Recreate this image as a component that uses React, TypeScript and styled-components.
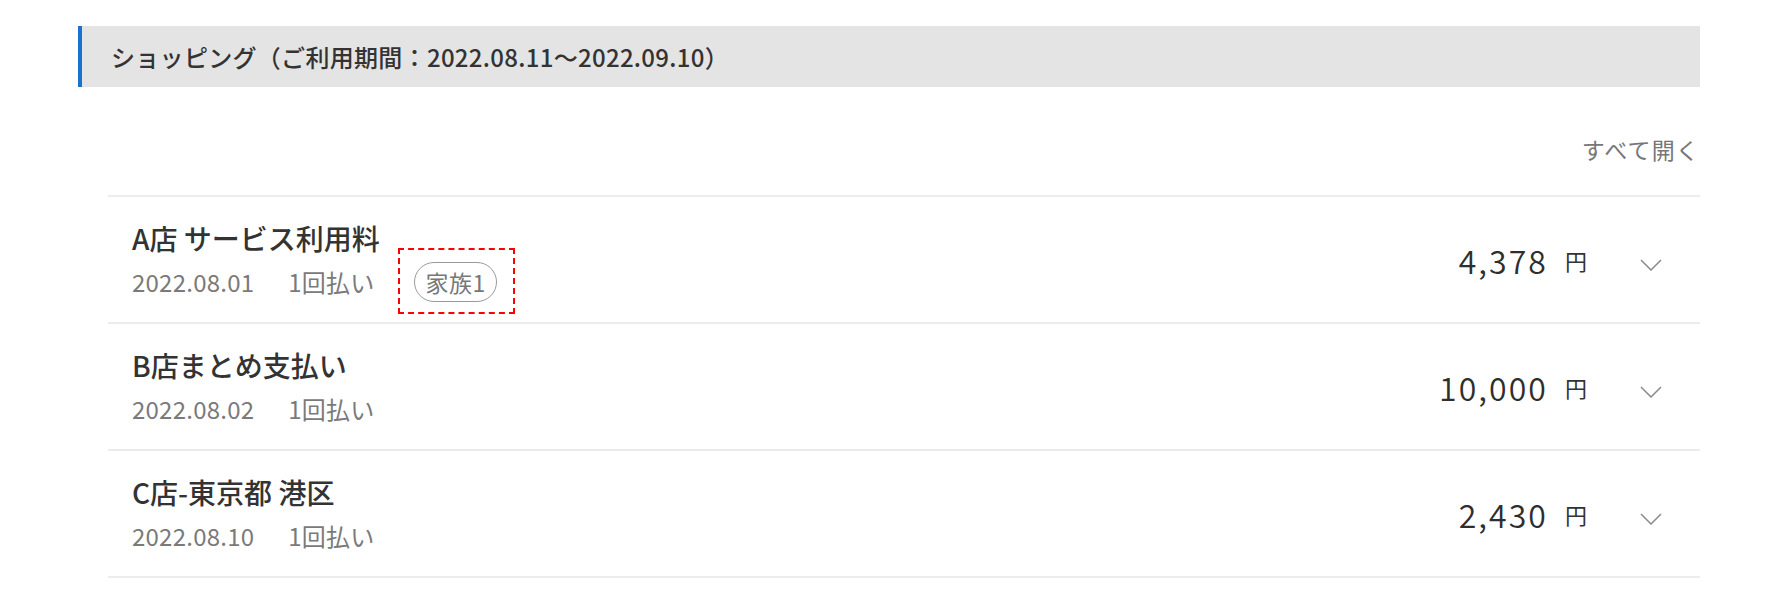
import React from "react";
import styled, { createGlobalStyle } from "styled-components";

const GlobalStyle = createGlobalStyle`
  html, body {
    margin: 0;
    padding: 0;
    background: #ffffff;
  }
  body {
    font-family: "Noto Sans CJK JP", "Noto Sans", sans-serif;
    color: #333333;
  }
`;

const Page = styled.div`
  padding: 26px 92px 0 78px;
  width: 1622px;
`;

const SectionHeader = styled.h2`
  margin: 0;
  height: 61px;
  display: flex;
  align-items: center;
  background: #e4e4e4;
  border-left: 4px solid #1a72cf;
  padding-left: 29px;
  font-size: 24px;
  font-weight: 500;
  color: #333333;
  letter-spacing: 0.3px;
`;

const Body = styled.div`
  padding-left: 30px;
`;

const ToolRow = styled.div`
  display: flex;
  justify-content: flex-end;
  margin-top: 45px;
  margin-bottom: 29px;
`;

const ExpandAll = styled.button`
  border: none;
  background: none;
  padding: 0;
  font-family: inherit;
  font-size: 23px;
  line-height: 34px;
  color: #777777;
  letter-spacing: 0.05em;
  cursor: pointer;
`;

const List = styled.ul`
  list-style: none;
  margin: 0;
  padding: 0;
  border-top: 2px solid #ececec;
`;

const Row = styled.li`
  display: flex;
  align-items: center;
  height: 125px;
  box-sizing: content-box;
  border-bottom: 2px solid #ececec;
  padding: 0 38px 0 24px;
`;

const Info = styled.div`
  flex: 1;
  display: flex;
  flex-direction: column;
  gap: 10px;
  margin-bottom: 3px;
`;

const Title = styled.div`
  font-size: 28px;
  font-weight: 500;
  line-height: 36px;
  color: #333333;
  letter-spacing: 0;
`;

const Meta = styled.div`
  display: flex;
  align-items: center;
  height: 30px;
  font-size: 24px;
  color: #7a7a7a;
  letter-spacing: 0.01em;
`;

const DateText = styled.span`
  margin-right: 34px;
`;

const Marked = styled.span`
  display: inline-flex;
  align-items: center;
  margin-left: 23px;
  padding: 12px 16px 10px 14px;
  border: 2px dashed #ff0000;
`;

const Tag = styled.span`
  display: inline-flex;
  align-items: center;
  height: 38px;
  padding: 0 10px 0 11px;
  border: 1px solid #9a9a9a;
  border-radius: 20px;
  font-size: 23px;
  color: #777777;
  letter-spacing: 0.02em;
`;

const Price = styled.div`
  display: flex;
  align-items: center;
`;

const Amount = styled.span`
  font-size: 32px;
  font-weight: 350;
  color: #2e2e2e;
  letter-spacing: 0.065em;
  line-height: 40px;
`;

const Yen = styled.span`
  margin-left: 17px;
  font-size: 22px;
  color: #333333;
`;

const Chevron = styled.svg`
  margin-left: 53px;
  margin-top: 10px;
  width: 22px;
  height: 12px;
  display: block;
`;

type Item = { title: string; date: string; pay: string; tag?: string; amount: string };

const items: Item[] = [
  { title: "A店 サービス利用料", date: "2022.08.01", pay: "1回払い", tag: "家族1", amount: "4,378" },
  { title: "B店まとめ支払い", date: "2022.08.02", pay: "1回払い", amount: "10,000" },
  { title: "C店-東京都 港区", date: "2022.08.10", pay: "1回払い", amount: "2,430" },
];

export default function App() {
  return (
    <>
      <GlobalStyle />
      <Page>
        <SectionHeader>ショッピング（ご利用期間：2022.08.11〜2022.09.10）</SectionHeader>
        <Body>
          <ToolRow>
            <ExpandAll>すべて開く</ExpandAll>
          </ToolRow>
          <List>
            {items.map((it) => (
              <Row key={it.title}>
                <Info>
                  <Title>{it.title}</Title>
                  <Meta>
                    <DateText>{it.date}</DateText>
                    <span>{it.pay}</span>
                    {it.tag && (
                      <Marked>
                        <Tag>{it.tag}</Tag>
                      </Marked>
                    )}
                  </Meta>
                </Info>
                <Price>
                  <Amount>{it.amount}</Amount>
                  <Yen>円</Yen>
                  <Chevron viewBox="0 0 22 12" fill="none">
                    <polyline points="1,1 11,11 21,1" stroke="#8a8a8a" strokeWidth="1.5" />
                  </Chevron>
                </Price>
              </Row>
            ))}
          </List>
        </Body>
      </Page>
    </>
  );
}
